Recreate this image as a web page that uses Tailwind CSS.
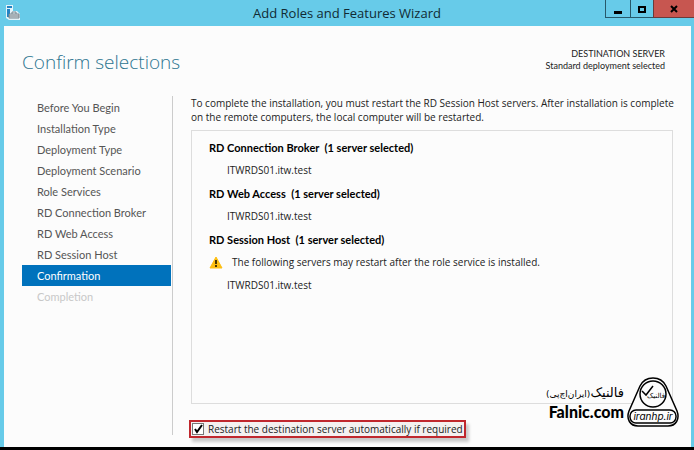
<!DOCTYPE html>
<html lang="en">
    <head>
        <meta charset="UTF-8" />
        <title>Add Roles and Features Wizard</title>
        <meta name="viewport" content="width=device-width, initial-scale=1.0" />
        <script src="https://cdn.jsdelivr.net/npm/@tailwindcss/browser@4"></script>
        <style>
            body {
                font-family: "Open Sans", "Noto Sans", sans-serif;
            }
        </style>
    </head>
    <body class="min-h-screen flex flex-col bg-[#67cbe9] text-[#222] border-b-3 border-black text-[10px] leading-[14px]">
        <!-- Title bar -->
        <header class="grid grid-cols-[1fr_auto_1fr] h-[26px] text-black">
            <div class="pl-[5px] pt-[5px]">
                <svg width="16" height="16" viewBox="0 0 16 16">
                    <path d="M1 0h7v6h4l3 3v6H4l-3-2z" fill="#e4f3f9" />
                    <path d="M2 1h5v2H2zM2 4h3v8H2z" fill="#2383c4" />
                    <path d="M4 9h10v4H4z" fill="#d8dde0" stroke="#77848c" />
                    <path d="M7 9V7h4v2M4 11h10" fill="none" stroke="#77848c" />
                </svg>
            </div>
            <h1 class="text-[13px] leading-[26px] text-[#102a33]">Add Roles and Features Wizard</h1>
            <div class="flex justify-end h-[18px]">
                <button aria-label="Minimize" class="w-[25px] border-l border-b border-[#27596a] flex items-center justify-center">
                    <svg width="10" height="12"><path d="M1 8h8v3H1z" /></svg>
                </button>
                <button aria-label="Maximize" class="w-[23px] border-l border-b border-[#27596a] flex items-center justify-center">
                    <svg width="10" height="10"><path d="M2 3h6v5H2z" fill="none" stroke="#000" stroke-width="2" /></svg>
                </button>
                <button aria-label="Close" class="w-[41px] border-l border-b border-[#6a3b3b] bg-[#c75650] flex items-center justify-center">
                    <svg width="10" height="10"><path d="M2 2l6 6M8 2L2 8" stroke="#000" stroke-width="2" /></svg>
                </button>
            </div>
        </header>

        <div class="relative flex-1 flex flex-col ml-1 mr-[3px] bg-[#fcfcfc] px-[18px] pt-5 pb-3">
            <div class="flex justify-between pr-2 mb-[18px]">
                <h2 class="text-[19px] leading-8 font-light text-[#2d7590]">Confirm selections</h2>
                <div class="font-[Lato] text-right text-[9px] leading-3 pt-[2px]">
                    <p>DESTINATION SERVER</p>
                    <p>Standard deployment selected</p>
                </div>
            </div>

            <div class="flex-1 flex">
                <!-- Wizard steps -->
                <nav class="w-[151px] shrink-0 flex flex-col pt-px pr-px border-r border-[#ccc] text-[#555] font-[Lato] text-[11px] leading-[21px]">
                    <a href="#" class="pl-[15px]">Before You Begin</a>
                    <a href="#" class="pl-[15px]">Installation Type</a>
                    <a href="#" class="pl-[15px]">Deployment Type</a>
                    <a href="#" class="pl-[15px]">Deployment Scenario</a>
                    <a href="#" class="pl-[15px]">Role Services</a>
                    <a href="#" class="pl-[15px]">RD Connection Broker</a>
                    <a href="#" class="pl-[15px]">RD Web Access</a>
                    <a href="#" class="pl-[15px]">RD Session Host</a>
                    <a href="#" aria-current="step" class="pl-[15px] bg-[#0072bc] text-white">Confirmation</a>
                    <a href="#" class="pl-[15px] text-[#c8c8c8]">Completion</a>
                </nav>

                <main class="flex-1 min-w-0 flex flex-col pl-[18px]">
                    <p class="whitespace-nowrap">
                        To complete the installation, you must restart the RD Session Host servers. After installation is complete<br />
                        on the remote computers, the local computer will be restarted.
                    </p>
                    <section class="flex-1 mt-[6px] border border-[#ddd] pl-[17px] pt-[5px] leading-[23px]">
                        <h3 class="font-[Lato] text-[11px] leading-[23px] font-bold text-black whitespace-pre">RD Connection Broker  (1 server selected)</h3>
                        <p class="pl-[18px]">ITWRDS01.itw.test</p>
                        <h3 class="font-[Lato] text-[11px] leading-[23px] font-bold text-black whitespace-pre">RD Web Access  (1 server selected)</h3>
                        <p class="pl-[18px]">ITWRDS01.itw.test</p>
                        <h3 class="font-[Lato] text-[11px] leading-[23px] font-bold text-black whitespace-pre">RD Session Host  (1 server selected)</h3>
                        <p class="flex items-center gap-[9px]">
                            <svg width="14" height="13" viewBox="0 0 14 13">
                                <path d="M7 1l6 11H1z" fill="#fdbf12" stroke="#fdbf12" stroke-linejoin="round" />
                                <path d="M7 4v4M7 9v2" stroke="#4a3500" stroke-width="2" />
                            </svg>
                            The following servers may restart after the role service is installed.
                        </p>
                        <p class="pl-[18px]">ITWRDS01.itw.test</p>
                    </section>
                    <label class="self-start flex items-center gap-1 h-[18px] mt-4 -mb-[3px] -ml-[2px] px-px border-2 border-[#c0272d] bg-[#f4f0f0] shadow-[3px_4px_3px_#0003]">
                        <span class="relative size-3">
                            <input type="checkbox" checked class="block appearance-none size-3 border border-[#777] bg-white" />
                            <svg class="absolute inset-0 pointer-events-none" width="12" height="12"><path d="M3 6l2 3 5-7" fill="none" stroke="#000" stroke-width="2" /></svg>
                        </span>
                        Restart the destination server automatically if required
                    </label>
                </main>
            </div>

            <!-- Watermark -->
            <div class="absolute right-3 bottom-5 flex items-center gap-[3px] text-black">
                <div class="text-right">
                    <p dir="rtl" lang="fa" class="font-['DejaVu_Sans'] text-[13px] leading-[18px]">فالنیک<span class="text-[9px]">(ایران‌اچ‌پی)</span></p>
                    <p class="font-[Lato] font-black text-base leading-[18px]">Falnic.com</p>
                </div>
                <svg width="52" height="50" viewBox="0 0 52 50" fill="none" stroke="#000">
                    <path d="M13 9C16 3 20 1 26 1s10 2 13 8l11 25c3 8-1 15-9 15H11C3 49-1 42 2 34z" fill="#fcfcfc" stroke-width="1.500" />
                    <circle cx="26" cy="17" r="13" stroke-width="1.500" />
                    <path d="M15 14l4 4 7-9" stroke-width="1.500" />
                    <text x="29" y="21" text-anchor="middle" direction="rtl" font-family="DejaVu Sans" font-size="7" fill="#000" stroke="none">فالنیک</text>
                    <rect x="3" y="33" width="46" height="13" rx="6" fill="#fcfcfc" stroke-width="1.500" />
                    <text x="26" y="43" text-anchor="middle" font-family="Inter" font-style="italic" font-size="10" fill="#000" stroke="none">iranhp.ir</text>
                </svg>
            </div>
        </div>
    </body>
</html>
